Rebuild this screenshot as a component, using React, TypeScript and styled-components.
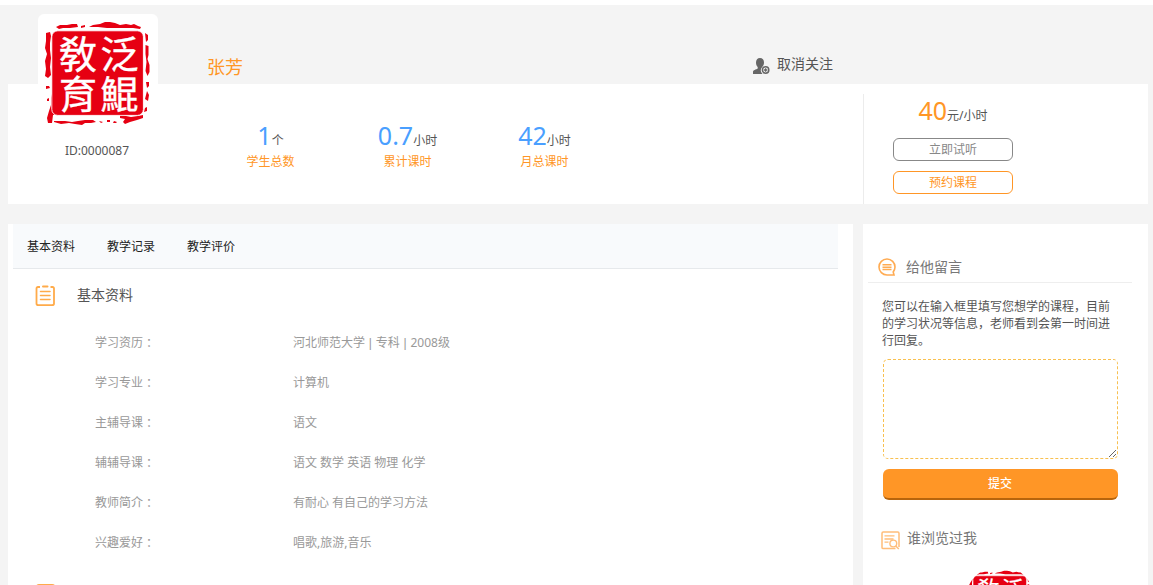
import React from "react";
import styled, { createGlobalStyle } from "styled-components";

const ORANGE = "#ff9626";
const GREY_BG = "#f4f4f4";

const GlobalStyle = createGlobalStyle`
  * { box-sizing: border-box; }
  body {
    margin: 0;
    background: ${GREY_BG};
    font-family: "Noto Sans", "Noto Sans CJK SC", sans-serif;
    font-size: 12px;
    color: #555;
    overflow: hidden;
  }
  p, h1, h2, dl, dd, dt { margin: 0; font-weight: 400; }
`;

const Page = styled.div`
  width: 1153px;
  height: 585px;
  overflow: hidden;
  padding: 0 5px 0 8px;
  border-top: 5px solid #fff;
  background: ${GREY_BG};
`;

const Profile = styled.header`
  display: flex;
  height: 199px;
  background: linear-gradient(${GREY_BG} 79px, #fff 79px);
`;

const Identity = styled.div`
  display: flex;
  flex-direction: column;
  align-items: center;
  width: 178px;
  padding-top: 9px;
`;

const AvatarCard = styled.div`
  width: 120px;
  height: 120px;
  margin-left: 2px;
  border-radius: 6px;
  background: #fff;
`;

const TeacherId = styled.p`
  margin-top: 8px;
  line-height: 17px;
`;

const Summary = styled.div`
  width: 677px;
`;

const NameRow = styled.div`
  display: flex;
  height: 79px;
  padding-left: 21px;
`;

const Name = styled.h1`
  width: 546px;
  padding-top: 49px;
  font-size: 18px;
  line-height: 26px;
  color: ${ORANGE};
`;

const Follow = styled.div`
  display: flex;
  gap: 7px;
  padding-top: 49px;
  font-size: 14px;
  line-height: 20px;
  svg { margin-top: 4px; }
`;

const Stats = styled.div`
  display: flex;
  padding: 34px 0 0 16px;
`;

const Stat = styled.div`
  width: 137px;
  text-align: center;
`;

const Figure = styled.p<{ $color: string }>`
  height: 34px;
  line-height: 34px;
  white-space: nowrap;
  b {
    font-size: 25px;
    font-weight: 400;
    color: ${(p) => p.$color};
  }
`;

const StatLabel = styled.p`
  padding-top: 1px;
  line-height: 18px;
  color: ${ORANGE};
`;

const Booking = styled.div`
  display: flex;
  flex-direction: column;
  flex: 1;
  margin-top: 89px;
  padding-left: 29px;
  border-left: 1px solid #ececec;
`;

const Price = styled.div`
  width: 120px;
  height: 44px;
  text-align: center;
  line-height: 32px;
  ${Figure} { height: 32px; line-height: 32px; }
`;

const OutlineButton = styled.button<{ $color: string }>`
  width: 120px;
  height: 23px;
  margin-bottom: 10px;
  padding: 0;
  border: 1px solid ${(p) => p.$color};
  border-radius: 6px;
  background: #fff;
  color: ${(p) => p.$color};
  font: inherit;
  line-height: 20px;
`;

const Columns = styled.div`
  display: flex;
  gap: 10px;
  height: 361px;
  margin-top: 20px;
`;

const Main = styled.main`
  width: 845px;
  padding: 0 15px 0 5px;
  background: #fff;
`;

const Tabs = styled.nav`
  display: flex;
  gap: 31px;
  height: 45px;
  padding-left: 14px;
  border-bottom: 1px solid #e6e9ec;
  background: #f8fafc;
  color: #222;
  line-height: 45px;
`;

const Tab = styled.span`
  width: 49px;
  white-space: nowrap;
`;

const SectionHead = styled.div`
  display: flex;
  gap: 21px;
  height: 54px;
  padding: 16px 0 0 22px;
  h2 {
    font-size: 14px;
    line-height: 19px;
  }
`;

const Facts = styled.dl`
  color: #999;
`;

const Fact = styled.div`
  display: flex;
  height: 40px;
  padding-left: 82px;
  line-height: 40px;
  dt { width: 198px; }
`;

const Colon = styled.span`
  margin-left: 3px;
`;

const Pipe = styled.span`
  margin: 0 0.700px;
  font-family: "Liberation Sans", sans-serif;
`;

const NextSection = styled.div`
  padding: 21px 0 0 22px;
`;

const Side = styled.aside`
  width: 285px;
  padding: 0 16px 0 5px;
  background: #fff;
`;

const SideHead = styled.div<{ $lined?: boolean }>`
  display: flex;
  align-items: flex-start;
  gap: ${(p) => (p.$lined ? "9px" : "7px")};
  height: ${(p) => (p.$lined ? "59px" : "43px")};
  padding: ${(p) => (p.$lined ? "33px 0 0 10px" : "28px 0 0 13px")};
  border-bottom: ${(p) => (p.$lined ? "1px solid #eee" : "none")};
  color: #777;
  h2 {
    font-size: 14px;
    line-height: 20px;
  }
  svg { flex: none; margin-top: ${(p) => (p.$lined ? "1px" : "3px")}; }
`;

const MessageForm = styled.form`
  padding: 15px 14px 0 14px;
`;

const Hint = styled.p`
  width: 230px;
  line-height: 17px;
`;

const MessageBox = styled.textarea`
  display: block;
  width: 235px;
  height: 100px;
  margin: 10px 0 10px 1px;
  border: 1px dashed #f8c050;
  border-radius: 5px;
  background: #fff;
  outline: none;
`;

const Submit = styled.button`
  display: block;
  width: 235px;
  height: 31px;
  margin-left: 1px;
  padding: 0 1px 0 0;
  border: 0;
  border-bottom: 2px solid #b8650c;
  border-radius: 6px;
  background: ${ORANGE};
  color: #fff;
  font: inherit;
  font-weight: 500;
  line-height: 28px;
`;

const Visitor = styled.div`
  width: 70px;
  height: 70px;
  margin: 23px 0 0 97px;
  border-radius: 50%;
  overflow: hidden;
`;

const SealSvg = styled.svg`
  display: block;
  text {
    font-family: "Noto Sans CJK TC", sans-serif;
    font-size: 38px;
    font-weight: 400;
    fill: #fff;
    stroke: #fff;
    stroke-width: 0.4px;
  }
`;

const Seal = ({ size }: { size: number }) => (
  <SealSvg width={size} height={size} viewBox="0 0 120 120">
    <g fill="#e60012">
      <path d="M18 13l4-2 7 0 5-1 5 0 1 3-8 1-7 0-4 1zM43 12l4-1 0 2-4 1zM51 13l4-2 7-1 5-2 5 0 5 1 5 2 6-1 5 1 3-1 4 2 3 1-1 2-7-1-8 0-8 0-10 0-9-1-8 0z" />
      <path d="M8 19l4-1 1 4-1 7 0 7 1 8-1 9 1 8-3 3-3-2 1-7-1-8 2-7-2-6 1-7zM8 72l3 0 1 2-4 1zM9 85l2-1 0 3-2 0z" />
      <path d="M15 76l-2 8 0 7-2 6-2 7 1 5 4 0 1-8 6-1 0-24z" />
      <path d="M107 19l3 2 0 5-2 2zM107.500 31l3 1 0 9-1 4 2 6 0 7-2 4-2-5 1-9-1-8zM108 68l3 0 0 4-2 2zM109 77l2 4-1 6-3-2zM107 94l2-1 0 4-3 1z" />
      <path d="M16 107l6 0 5 0 7 1 6-1 7-1 8 0 3 2-5 1-6 0-3 2-7-1-6-1-8 1-7-2zM61 107l4 1-2 1zM69 106l3 0 0 2-3 0zM76 107l3 1-1 1-3 0zM82 100l6 2 5 1 7-1 5-1 0 3-6 2-7 2-5 2-2-2 2-3-5-1z" />
    </g>
    <rect x="13.800" y="16.800" width="91.600" height="84.600" rx="6" fill="#e60012" stroke="#fff" strokeWidth="0.900" />
    <text x="21" y="53.500">敎</text>
    <text x="62.500" y="53.500">泛</text>
    <text x="21" y="94">育</text>
    <text x="62.500" y="94">鯤</text>
  </SealSvg>
);

const FollowIcon = () => (
  <svg width="17" height="17" viewBox="0 0 17 17">
    <path
      fill="#666"
      d="M7 0C4.500 0 3 1.800 3 4.500c0 2 .8 3.500 1.700 4.500v1.500C3 11.600 0 12 0 14v2h9.500A5 5 0 0 1 9 9.300C10.200 8 11 6.500 11 4.500 11 1.800 9.500 0 7 0z"
    />
    <circle cx="12.600" cy="12" r="3.200" fill="#f4f4f4" stroke="#666" strokeWidth="1.500" />
    <path d="M12.600 10.300v3.400M10.900 12h3.400" stroke="#666" strokeWidth="1.300" />
  </svg>
);

const ClipboardIcon = () => (
  <svg width="21" height="22" viewBox="0 0 21 22" fill="none" stroke="#ffab4a">
    <path strokeWidth="1.800" d="M5 2H3Q1.500 2 1.500 3.500v15q0 1.700 2 1.700h13.500q2 0 2-1.700v-15Q19 2 17.500 2H15.500" />
    <path strokeWidth="2" strokeLinecap="round" d="M8 1.500h4.500" />
    <path strokeWidth="1.500" strokeLinecap="round" d="M5.500 6.500h9.500M5.500 10.500h9.500M5.500 14.500h9.500" />
  </svg>
);

const RecordIcon = () => (
  <svg width="21" height="21" viewBox="0 0 21 21" fill="none" stroke="#ffab4a">
    <rect x="1" y="1" width="19" height="19" rx="3" strokeWidth="1.800" />
  </svg>
);

const MessageIcon = () => (
  <svg width="19" height="19" viewBox="0 0 19 19" fill="none" stroke="#ffab52">
    <path strokeWidth="1.600" d="M16 17H9A8 8 0 1 1 17 9c0 2-.8 3.600-1.800 5z" />
    <path strokeWidth="1.500" d="M4.500 6.800h9M4.500 9.200h9M4.500 11.600h9" />
  </svg>
);

const VisitorsIcon = () => (
  <svg width="19" height="19" viewBox="0 0 19 19" fill="none" stroke="#ffbd7a">
    <path strokeWidth="1.500" d="M14.500 17.600H2.200Q1 17.600 1 16.400V2.200Q1 1 2.200 1h14.600Q18 1 18 2.200V16" />
    <path strokeWidth="1.300" d="M3.500 4.800h10M3.500 8h9M3.500 11.200h4" />
    <circle cx="12.300" cy="12.500" r="3.400" strokeWidth="1.400" />
    <path strokeWidth="1.500" d="M14.800 15l3 3" />
  </svg>
);

const stats = [
  { value: "1", unit: "个", label: "学生总数" },
  { value: "0.7", unit: "小时", label: "累计课时" },
  { value: "42", unit: "小时", label: "月总课时" },
];

const facts: [string, React.ReactNode][] = [
  [
    "学习资历",
    <>
      河北师范大学 <Pipe>|</Pipe> 专科 <Pipe>|</Pipe> 2008级
    </>,
  ],
  ["学习专业", "计算机"],
  ["主辅导课", "语文"],
  ["辅辅导课", "语文 数学 英语 物理 化学"],
  ["教师简介", "有耐心 有自己的学习方法"],
  ["兴趣爱好", "唱歌,旅游,音乐"],
];

export default function App() {
  return (
    <>
      <GlobalStyle />
      <Page>
        <Profile>
          <Identity>
            <AvatarCard>
              <Seal size={120} />
            </AvatarCard>
            <TeacherId>ID:0000087</TeacherId>
          </Identity>
          <Summary>
            <NameRow>
              <Name>张芳</Name>
              <Follow>
                <FollowIcon />
                取消关注
              </Follow>
            </NameRow>
            <Stats>
              {stats.map((s) => (
                <Stat key={s.label}>
                  <Figure $color="#4a9fff">
                    <b>{s.value}</b>
                    {s.unit}
                  </Figure>
                  <StatLabel>{s.label}</StatLabel>
                </Stat>
              ))}
            </Stats>
          </Summary>
          <Booking>
            <Price>
              <Figure $color={ORANGE}>
                <b>40</b>元/小时
              </Figure>
            </Price>
            <OutlineButton $color="#888">立即试听</OutlineButton>
            <OutlineButton $color={ORANGE}>预约课程</OutlineButton>
          </Booking>
        </Profile>
        <Columns>
          <Main>
            <Tabs>
              <Tab>基本资料</Tab>
              <Tab>教学记录</Tab>
              <Tab>教学评价</Tab>
            </Tabs>
            <SectionHead>
              <ClipboardIcon />
              <h2>基本资料</h2>
            </SectionHead>
            <Facts>
              {facts.map(([label, value]) => (
                <Fact key={label}>
                  <dt>
                    {label}
                    <Colon>：</Colon>
                  </dt>
                  <dd>{value}</dd>
                </Fact>
              ))}
            </Facts>
            <NextSection>
              <RecordIcon />
            </NextSection>
          </Main>
          <Side>
            <SideHead $lined>
              <MessageIcon />
              <h2>给他留言</h2>
            </SideHead>
            <MessageForm>
              <Hint>
                您可以在输入框里填写您想学的课程，目前的学习状况等信息，老师看到会第一时间进行回复。
              </Hint>
              <MessageBox />
              <Submit type="button">提交</Submit>
            </MessageForm>
            <SideHead>
              <VisitorsIcon />
              <h2>谁浏览过我</h2>
            </SideHead>
            <Visitor>
              <Seal size={70} />
            </Visitor>
          </Side>
        </Columns>
      </Page>
    </>
  );
}
